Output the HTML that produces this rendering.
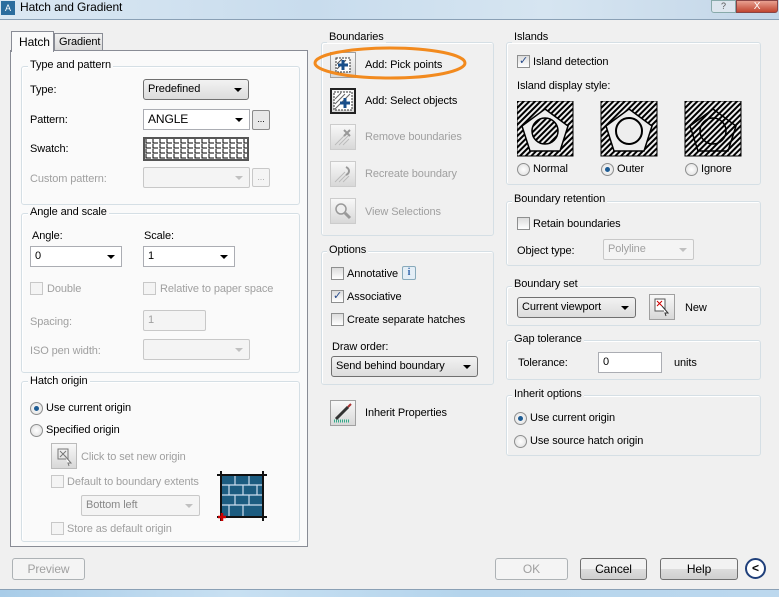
<!DOCTYPE html>
<html><head><meta charset="utf-8"><style>
*{box-sizing:border-box}
body{margin:0;width:779px;height:597px;overflow:hidden;background:#f0f0f0;font-family:"Liberation Sans",sans-serif;font-size:11px;letter-spacing:-0.1px;color:#000;position:relative}
.a{position:absolute;white-space:nowrap}
.g{position:absolute;border:1px solid #d5dfe5;border-radius:3px;box-shadow:inset 1px 1px 0 #fff}
.gl{position:absolute;background:#f0f0f0;padding:0 2px;white-space:nowrap}
.dis{color:#a0a0a0}
.cb{position:absolute;width:13px;height:13px;border:1px solid #8e8f8f;background:linear-gradient(#dcdcdc,#fff)}
.cb.d{border-color:#c8c8c8;background:#f4f4f4}
.rb{position:absolute;width:13px;height:13px;border-radius:50%;border:1px solid #8e8f8f;background:radial-gradient(#fff,#dcdcdc)}
.rb.on::after{content:"";position:absolute;left:3px;top:3px;width:5px;height:5px;border-radius:50%;background:#1d5c94}
.dd{position:absolute;height:21px;border:1px solid #707070;border-radius:3px;background:linear-gradient(#f2f2f2,#dcdcdc);padding:3px 4px}
.dd::after{content:"";position:absolute;right:6px;top:8px;border-left:4px solid transparent;border-right:4px solid transparent;border-top:4px solid #000}
.tx{position:absolute;height:21px;border:1px solid #abadb3;background:#fff;padding:3px 4px}
.tx.dda::after{content:"";position:absolute;right:6px;top:8px;border-left:4px solid transparent;border-right:4px solid transparent;border-top:4px solid #000}
.txd{position:absolute;height:21px;border:1px solid #c8c8c8;border-radius:2px;background:#f4f4f4;padding:3px 4px;color:#a0a0a0}
.txd.ar::after{content:"";position:absolute;right:6px;top:8px;border-left:4px solid transparent;border-right:4px solid transparent;border-top:4px solid #c0c0c0}
.btn{position:absolute;height:22px;border:1px solid #707070;border-radius:3px;background:linear-gradient(#f2f2f2 50%,#dddddd 50%,#cfcfcf);text-align:center;line-height:20px;font-size:12px}
.btn.d{border-color:#adb2b5;background:#f4f4f4;color:#a0a0a0}
.ib{position:absolute;width:26px;height:26px;border:1px solid #a0a0a0;background:linear-gradient(#f8f8f8,#d8d8d8)}
</style></head><body>
<div class="a" style="left:0;top:0;width:779px;height:20px;background:linear-gradient(90deg,#dbe8f3,#c8dced 40%,#d6e5f1 70%,#c3d6e8)"></div>
<div class="a" style="left:1px;top:1px;width:14px;height:14px;background:#2b6d9e;color:#fff;font-size:9px;line-height:14px;text-align:center">A</div>
<div class="a" style="left:20px;top:0;font-size:12px;line-height:15px">Hatch and Gradient</div>
<div class="a" style="left:711px;top:0;width:25px;height:13px;border:1px solid #8aa;border-radius:0 0 0 3px;background:#dde6ee;font-size:9px;text-align:center;color:#555">?</div>
<div class="a" style="left:736px;top:0;width:42px;height:13px;border:1px solid #844;border-radius:0 0 3px 0;background:linear-gradient(#e8a090,#c04530);color:#fff;font-size:10px;text-align:center;line-height:12px">X</div>
<div class="a" style="left:0;top:19px;width:779px;height:1px;background:#8aa0b5"></div>

<div class="a" style="left:10px;top:50px;width:298px;height:497px;border:1px solid #898c95;background:#fafafa"></div>
<div class="a" style="left:11px;top:31px;width:43px;height:21px;border:1px solid #898c95;border-bottom:none;background:#fafafa;padding:3px 0 0 7px;font-size:12px">Hatch</div>
<div class="a" style="left:54px;top:33px;width:49px;height:17px;border:1px solid #898c95;border-bottom:none;background:linear-gradient(#f2f2f2,#dadada);padding:2px 0 0 4px">Gradient</div>

<div class="g" style="left:21px;top:66px;width:279px;height:139px"></div>
<div class="gl" style="left:28px;top:59px;background:#fafafa">Type and pattern</div>
<div class="a" style="left:30px;top:84px">Type:</div>
<div class="dd" style="left:143px;top:79px;width:106px">Predefined</div>
<div class="a" style="left:30px;top:114px">Pattern:</div>
<div class="tx dda" style="left:143px;top:109px;width:107px;font-size:12px;padding-top:2px">ANGLE</div>
<div class="a" style="left:252px;top:110px;width:18px;height:20px;border:1px solid #8a8a8a;border-radius:2px;background:#e8e8e8;font-size:9px;text-align:center;line-height:16px">...</div>
<div class="a" style="left:30px;top:143px">Swatch:</div>
<div class="a" style="left:143px;top:137px;width:106px;height:24px;border:2px solid #555;background:#fff;overflow:hidden">
<svg width="102" height="20"><defs><pattern id="an" width="7" height="5" patternUnits="userSpaceOnUse"><path d="M1 0V4H6" stroke="#000" fill="none" stroke-width="1"/></pattern></defs><rect width="102" height="20" fill="url(#an)"/></svg></div>
<div class="a dis" style="left:30px;top:173px">Custom pattern:</div>
<div class="txd ar" style="left:143px;top:167px;width:107px"></div>
<div class="a" style="left:252px;top:168px;width:18px;height:19px;border:1px solid #c8c8c8;border-radius:2px;background:#f4f4f4;font-size:9px;text-align:center;color:#aaa;line-height:16px">...</div>

<div class="g" style="left:21px;top:213px;width:279px;height:160px"></div>
<div class="gl" style="left:28px;top:206px;background:#fafafa">Angle and scale</div>
<div class="a" style="left:32px;top:230px">Angle:</div>
<div class="tx dda" style="left:30px;top:246px;width:92px">0</div>
<div class="a" style="left:144px;top:230px">Scale:</div>
<div class="tx dda" style="left:143px;top:246px;width:92px">1</div>
<div class="cb d" style="left:30px;top:282px"></div><div class="a dis" style="left:47px;top:283px">Double</div>
<div class="cb d" style="left:143px;top:282px"></div><div class="a dis" style="left:160px;top:283px">Relative to paper space</div>
<div class="a dis" style="left:30px;top:316px">Spacing:</div>
<div class="txd" style="left:143px;top:310px;width:63px">1</div>
<div class="a dis" style="left:30px;top:345px">ISO pen width:</div>
<div class="txd ar" style="left:143px;top:339px;width:107px"></div>

<div class="g" style="left:21px;top:381px;width:279px;height:161px"></div>
<div class="gl" style="left:28px;top:375px;background:#fafafa">Hatch origin</div>
<div class="rb on" style="left:30px;top:402px"></div><div class="a" style="left:46px;top:402px">Use current origin</div>
<div class="rb" style="left:30px;top:424px"></div><div class="a" style="left:46px;top:424px">Specified origin</div>
<div class="ib" style="left:51px;top:443px;border-color:#bbb"><svg width="24" height="24"><rect x="6" y="5" width="10" height="10" fill="none" stroke="#777"/><path d="M8 7l6 6M14 7l-6 6" stroke="#777"/><path d="M13 12l6 7h-3l1 3" stroke="#777" fill="#fff"/></svg></div>
<div class="a dis" style="left:81px;top:451px">Click to set new origin</div>
<div class="cb d" style="left:51px;top:475px"></div><div class="a dis" style="left:67px;top:476px">Default to boundary extents</div>
<div class="txd ar" style="left:81px;top:495px;width:119px;color:#888">Bottom left</div>
<div class="cb d" style="left:51px;top:522px"></div><div class="a dis" style="left:67px;top:523px">Store as default origin</div>
<svg class="a" style="left:217px;top:471px" width="50" height="50"><rect x="4" y="4" width="42" height="42" fill="#1c5c80"/><g stroke="#cde" stroke-width="1.2"><path d="M5 14H45M5 24H45M5 34H45M18 5V14M32 5V14M12 14V24M26 14V24M40 14V24M18 24V34M32 24V34M12 34V45M26 34V45"/></g><path d="M0 4H50M0 46H50M4 0V50M46 0V50" stroke="#111" stroke-width="2"/><path d="M1 46H9M5 42V50" stroke="#c00" stroke-width="2.5"/></svg>

<div class="g" style="left:321px;top:42px;width:173px;height:194px"></div>
<div class="gl" style="left:327px;top:31px">Boundaries</div>
<div class="ib" style="left:330px;top:52px"><svg width="24" height="24"><rect x="5" y="5" width="14" height="14" fill="#fff" stroke="#333" stroke-dasharray="2 1"/><path d="M6 16l9-9M6 11l5-5" stroke="#555"/><path d="M12 7v10M7 12h10" stroke="#1a4f8a" stroke-width="3"/></svg></div>
<div class="a" style="left:365px;top:59px">Add: Pick points</div>
<svg class="a" style="left:311px;top:44px" width="158" height="38"><ellipse cx="79" cy="19" rx="75" ry="15" fill="none" stroke="#f28a1e" stroke-width="3"/></svg>
<div class="ib" style="left:330px;top:88px;border:2px solid #222"><svg width="22" height="22"><rect x="2" y="2" width="18" height="18" fill="#fff" stroke="#333" stroke-dasharray="2 1"/><path d="M3 14l10-10M3 9l6-6M3 19l15-15" stroke="#666"/><path d="M13 8v10M8 13h10" stroke="#1a4f8a" stroke-width="3"/></svg></div>
<div class="a" style="left:365px;top:95px">Add: Select objects</div>
<div class="ib" style="left:330px;top:124px;border-color:#ccc"><svg width="24" height="24"><path d="M4 20l10-10M8 20l10-10M12 20l6-6" stroke="#bbb"/><path d="M13 5l6 6M19 5l-6 6" stroke="#999" stroke-width="2"/></svg></div>
<div class="a dis" style="left:365px;top:131px">Remove boundaries</div>
<div class="ib" style="left:330px;top:161px;border-color:#ccc"><svg width="24" height="24"><path d="M4 20l10-10M8 20l10-10M12 20l6-6" stroke="#bbb"/><path d="M15 5c4 2 4 6 0 8" stroke="#999" fill="none" stroke-width="2"/></svg></div>
<div class="a dis" style="left:365px;top:168px">Recreate boundary</div>
<div class="ib" style="left:330px;top:198px;border-color:#ccc"><svg width="24" height="24"><circle cx="10" cy="10" r="5" fill="#eee" stroke="#999" stroke-width="1.5"/><path d="M14 14l5 5" stroke="#999" stroke-width="3"/></svg></div>
<div class="a dis" style="left:365px;top:206px">View Selections</div>

<div class="g" style="left:321px;top:251px;width:173px;height:134px"></div>
<div class="gl" style="left:327px;top:244px">Options</div>
<div class="cb" style="left:331px;top:267px"></div><div class="a" style="left:347px;top:268px">Annotative</div>
<div class="a" style="left:402px;top:266px;width:14px;height:14px;border:1px solid #8ab;border-radius:2px;background:#e4eef6;color:#36a;font-size:10px;text-align:center;line-height:12px;font-family:'Liberation Serif',serif;font-weight:bold">i</div>
<div class="cb" style="left:331px;top:290px;font-size:11px;line-height:11px;color:#264a8a;text-align:center">✓</div><div class="a" style="left:347px;top:291px">Associative</div>
<div class="cb" style="left:331px;top:313px"></div><div class="a" style="left:347px;top:314px">Create separate hatches</div>
<div class="a" style="left:332px;top:341px">Draw order:</div>
<div class="dd" style="left:331px;top:356px;width:147px">Send behind boundary</div>
<div class="ib" style="left:330px;top:400px"><svg width="24" height="24"><path d="M5 18l12-12" stroke="#333" stroke-width="3"/><path d="M17 6l3-3" stroke="#a33" stroke-width="2"/><path d="M3 20h16" stroke="#3a8" stroke-dasharray="1 1" stroke-width="3"/></svg></div>
<div class="a" style="left:365px;top:407px">Inherit Properties</div>

<div class="g" style="left:506px;top:42px;width:255px;height:143px"></div>
<div class="gl" style="left:512px;top:31px">Islands</div>
<div class="cb" style="left:517px;top:55px;font-size:11px;line-height:11px;color:#264a8a;text-align:center">✓</div><div class="a" style="left:533px;top:56px">Island detection</div>
<div class="a" style="left:517px;top:80px">Island display style:</div>
<svg class="a" style="left:517px;top:101px" width="226" height="56">
<defs><pattern id="h" width="4" height="4" patternUnits="userSpaceOnUse" patternTransform="rotate(45)"><rect width="2" height="4" fill="#000"/></pattern></defs>
<g><rect x="0" y="0" width="56" height="55" fill="url(#h)" stroke="#000"/><polygon points="28,8 51,25 43,50 13,50 5,25" fill="#eee" stroke="#000" stroke-width="1.5"/><circle cx="28" cy="30" r="13" fill="url(#h)" stroke="#000" stroke-width="1.5"/></g>
<g transform="translate(84,0)"><rect x="0" y="0" width="56" height="55" fill="url(#h)" stroke="#000"/><polygon points="28,8 51,25 43,50 13,50 5,25" fill="#eee" stroke="#000" stroke-width="1.5"/><circle cx="28" cy="30" r="13" fill="#eee" stroke="#000" stroke-width="2"/></g>
<g transform="translate(168,0)"><rect x="0" y="0" width="56" height="55" fill="url(#h)" stroke="#000"/><polygon points="28,8 51,25 43,50 13,50 5,25" fill="none" stroke="#000" stroke-width="1.5"/><circle cx="28" cy="30" r="13" fill="none" stroke="#000" stroke-width="1.5"/></g>
</svg>
<div class="rb" style="left:517px;top:163px"></div><div class="a" style="left:533px;top:163px">Normal</div>
<div class="rb on" style="left:601px;top:163px"></div><div class="a" style="left:617px;top:163px">Outer</div>
<div class="rb" style="left:685px;top:163px"></div><div class="a" style="left:701px;top:163px">Ignore</div>

<div class="g" style="left:506px;top:201px;width:255px;height:65px"></div>
<div class="gl" style="left:512px;top:193px">Boundary retention</div>
<div class="cb" style="left:517px;top:217px"></div><div class="a" style="left:533px;top:218px">Retain boundaries</div>
<div class="a" style="left:517px;top:245px">Object type:</div>
<div class="txd ar" style="left:603px;top:239px;width:91px">Polyline</div>

<div class="g" style="left:506px;top:286px;width:255px;height:40px"></div>
<div class="gl" style="left:512px;top:278px">Boundary set</div>
<div class="dd" style="left:517px;top:297px;width:119px">Current viewport</div>
<div class="ib" style="left:649px;top:294px"><svg width="24" height="24"><rect x="5" y="4" width="10" height="12" fill="#fff" stroke="#555"/><path d="M7 6l5 5M12 6l-5 5" stroke="#c00"/><path d="M12 11l6 7h-3l1 3" stroke="#333" fill="#fff"/></svg></div>
<div class="a" style="left:685px;top:302px">New</div>

<div class="g" style="left:506px;top:340px;width:255px;height:40px"></div>
<div class="gl" style="left:512px;top:333px">Gap tolerance</div>
<div class="a" style="left:518px;top:357px">Tolerance:</div>
<div class="tx" style="left:598px;top:352px;width:64px">0</div>
<div class="a" style="left:674px;top:357px">units</div>

<div class="g" style="left:506px;top:395px;width:255px;height:61px"></div>
<div class="gl" style="left:512px;top:388px">Inherit options</div>
<div class="rb on" style="left:514px;top:412px"></div><div class="a" style="left:530px;top:412px">Use current origin</div>
<div class="rb" style="left:514px;top:435px"></div><div class="a" style="left:530px;top:435px">Use source hatch origin</div>

<div class="btn d" style="left:12px;top:558px;width:73px">Preview</div>
<div class="btn d" style="left:495px;top:558px;width:73px">OK</div>
<div class="btn" style="left:580px;top:558px;width:67px">Cancel</div>
<div class="btn" style="left:660px;top:558px;width:78px">Help</div>
<div class="a" style="left:745px;top:558px;width:21px;height:21px;border-radius:50%;border:2px solid #1f3f7a;background:#fff;text-align:center;font-size:12px;line-height:17px;font-weight:bold;color:#000">&lt;</div>
<div class="a" style="left:0;top:589px;width:779px;height:1px;background:#8aa0b5"></div>
<div class="a" style="left:0;top:590px;width:779px;height:7px;background:linear-gradient(90deg,#a8cce8,#c8e0f2 30%,#b4d4ec 60%,#bcd8ee)"></div>
</body></html>
